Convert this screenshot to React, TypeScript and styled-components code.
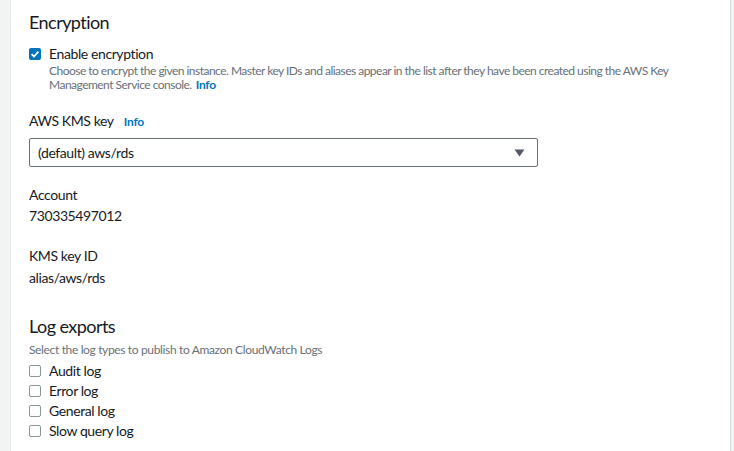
import React from 'react';
import styled, { createGlobalStyle } from 'styled-components';

const GlobalStyle = createGlobalStyle`
    html, body {
        margin: 0;
        padding: 0;
        background: #f2f3f3;
    }
    body {
        font-family: Lato, "Open Sans", sans-serif;
        color: #16191f;
    }
`;

const Frame = styled.div`
    display: flex;
    height: 451px;
    overflow: hidden;
`;

const Panel = styled.div`
    flex: 1;
    margin-left: 10px;
    margin-right: 3px;
    background: #ffffff;
    border-left: 1px solid #eaeded;
    border-right: 1px solid #d5dbdb;
    padding: 10px 18px 0 18px;
`;

const Heading = styled.h2<{ $top?: number }>`
    margin: ${(p) => p.$top ?? 0}px 0 0 0;
    font-size: 18px;
    font-weight: 400;
    line-height: 24px;
    letter-spacing: -0.55px;
`;

const CheckRow = styled.label<{ $top?: number }>`
    display: flex;
    align-items: flex-start;
    gap: 8px;
    margin-top: ${(p) => p.$top ?? 0}px;
    font-size: 14px;
    line-height: 20px;
    letter-spacing: -0.4px;
`;

const Box = styled.span<{ $checked?: boolean }>`
    flex: none;
    box-sizing: border-box;
    width: 12px;
    height: 12px;
    margin-top: 4px;
    border-radius: 2px;
    display: flex;
    align-items: center;
    justify-content: center;
    background: ${(p) => (p.$checked ? '#0073bb' : '#ffffff')};
    border: ${(p) => (p.$checked ? 'none' : '1px solid #879596')};
`;

const CheckText = styled.div`
    display: flex;
    flex-direction: column;
`;

const Hint = styled.div<{ $top?: number; $tight?: boolean }>`
    margin-top: ${(p) => p.$top ?? 0}px;
    font-size: 12px;
    line-height: 14px;
    letter-spacing: ${(p) => (p.$tight ? -0.52 : -0.35)}px;
    color: #687078;
    white-space: nowrap;
`;

const InfoLink = styled.a`
    color: #0073bb;
    font-weight: 700;
    font-size: 12px;
    letter-spacing: -0.2px;
    text-decoration: none;
    margin-left: 4px;
`;

const FieldLabel = styled.div<{ $top?: number }>`
    margin-top: ${(p) => p.$top ?? 0}px;
    font-size: 14px;
    line-height: 20px;
    letter-spacing: -0.4px;
    display: flex;
    align-items: baseline;
    gap: 6px;
`;

const Value = styled.div<{ $top?: number }>`
    margin-top: ${(p) => p.$top ?? 0}px;
    font-size: 14px;
    line-height: 20px;
    letter-spacing: -0.4px;
`;

const Select = styled.div`
    margin-top: 6px;
    box-sizing: border-box;
    width: 509px;
    height: 29px;
    border: 1px solid #687078;
    border-radius: 2px;
    display: flex;
    align-items: center;
    justify-content: space-between;
    padding: 0 12px 0 8px;
    font-size: 14px;
    letter-spacing: -0.4px;
`;

const LogList = styled.div`
    display: flex;
    flex-direction: column;
    margin-top: 4px;
`;

const Check = () => (
    <svg width="10" height="10" viewBox="0 0 10 10">
        <path d="M1.6 5.2 L4 7.5 L8.4 2.6" fill="none" stroke="#ffffff" strokeWidth="1.8" />
    </svg>
);

const Caret = () => (
    <svg width="11" height="8" viewBox="0 0 11 8">
        <path d="M0.5 0.5 H10.5 L5.5 7.5 Z" fill="#545b64" />
    </svg>
);

const logTypes = ['Audit log', 'Error log', 'General log', 'Slow query log'];

const App: React.FC = () => {
    return (
        <>
            <GlobalStyle />
            <Frame>
                <Panel>
                    <Heading>Encryption</Heading>
                    <CheckRow $top={10}>
                        <Box $checked>
                            <Check />
                        </Box>
                        <CheckText>
                            <span>Enable encryption</span>
                            <Hint $tight>
                                Choose to encrypt the given instance. Master key IDs and aliases appear in the list
                                after they have been created using the AWS Key
                                <br />
                                Management Service console.
                                <InfoLink>Info</InfoLink>
                            </Hint>
                        </CheckText>
                    </CheckRow>

                    <FieldLabel $top={19}>
                        AWS KMS key <InfoLink>Info</InfoLink>
                    </FieldLabel>
                    <Select>
                        <span>(default) aws/rds</span>
                        <Caret />
                    </Select>

                    <FieldLabel $top={18}>Account</FieldLabel>
                    <Value $top={1}>730335497012</Value>

                    <FieldLabel $top={20}>KMS key ID</FieldLabel>
                    <Value $top={2}>alias/aws/rds</Value>

                    <Heading $top={26}>Log exports</Heading>
                    <Hint $top={5}>Select the log types to publish to Amazon CloudWatch Logs</Hint>
                    <LogList>
                        {logTypes.map((t) => (
                            <CheckRow key={t}>
                                <Box />
                                <span>{t}</span>
                            </CheckRow>
                        ))}
                    </LogList>
                </Panel>
            </Frame>
        </>
    );
};

export default App;
